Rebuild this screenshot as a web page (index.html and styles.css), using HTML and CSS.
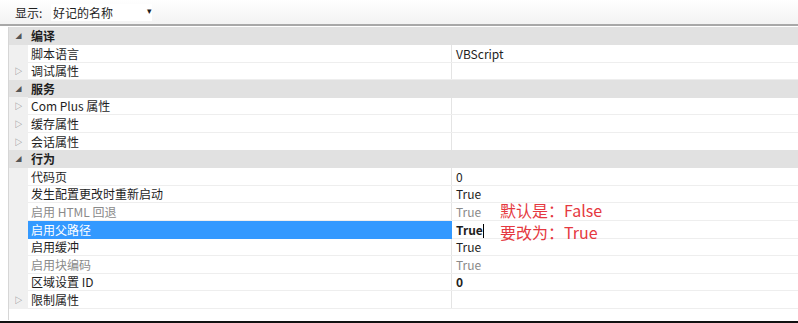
FILE: index.html
```html
<!DOCTYPE html>
<html>
<head>
    <meta charset="utf-8">
    <title>属性</title>
    <link rel="stylesheet" href="styles.css">
</head>
<body>
    <div class="toolbar">
        <span class="lbl">显示:</span>
        <span class="combo">好记的名称<span class="arrow">▾</span></span>
    </div>
    <div class="grid">
        <div class="row sect"><span class="tg open">◢</span><span class="name">编译</span><span class="val"></span></div>
        <div class="row"><span class="tg"></span><span class="name">脚本语言</span><span class="val">VBScript</span></div>
        <div class="row"><span class="tg">▷</span><span class="name">调试属性</span><span class="val"></span></div>
        <div class="row sect"><span class="tg open">◢</span><span class="name">服务</span><span class="val"></span></div>
        <div class="row"><span class="tg">▷</span><span class="name">Com Plus 属性</span><span class="val"></span></div>
        <div class="row"><span class="tg">▷</span><span class="name">缓存属性</span><span class="val"></span></div>
        <div class="row"><span class="tg">▷</span><span class="name">会话属性</span><span class="val"></span></div>
        <div class="row sect"><span class="tg open">◢</span><span class="name">行为</span><span class="val"></span></div>
        <div class="row"><span class="tg"></span><span class="name">代码页</span><span class="val">0</span></div>
        <div class="row"><span class="tg"></span><span class="name">发生配置更改时重新启动</span><span class="val">True</span></div>
        <div class="row dim"><span class="tg"></span><span class="name">启用 HTML 回退</span><span class="val">True</span></div>
        <div class="row sel"><span class="tg"></span><span class="name">启用父路径</span><span class="val"><b>True</b><i class="caret"></i></span></div>
        <div class="row"><span class="tg"></span><span class="name">启用缓冲</span><span class="val">True</span></div>
        <div class="row dim"><span class="tg"></span><span class="name">启用块编码</span><span class="val">True</span></div>
        <div class="row"><span class="tg"></span><span class="name">区域设置 ID</span><span class="val"><b>0</b></span></div>
        <div class="row"><span class="tg">▷</span><span class="name">限制属性</span><span class="val"></span></div>
        <div class="note">默认是：False<br>要改为：True</div>
    </div>
</body>
</html>
```

FILE: styles.css
```css
* {
    margin: 0;
    padding: 0;
    box-sizing: border-box;
}

body {
    width: 798px;
    height: 323px;
    overflow: hidden;
    background: white;
    font-family: "Noto Sans CJK SC", "Noto Sans", sans-serif;
    font-size: 12px;
    color: #1e1e1e;
    border-bottom: 2px solid #111;
}

.toolbar {
    height: 26px;
    display: flex;
    align-items: center;
    background: linear-gradient(#ffffff, #f3f3f3);
    border-bottom: 2px solid #a8a8a8;
    padding-left: 15px;
}

.lbl {
    width: 36px;
}

.combo {
    display: flex;
    justify-content: space-between;
    width: 101px;
    padding-left: 2px;
    background: white;
}

.arrow {
    font-size: 9px;
}

.grid {
    position: relative;
    margin-left: 8px;
    margin-top: 1px;
    height: 293px;
    border-left: 1px solid #d6d6d6;
    background: linear-gradient(90deg, transparent 442px, #e4e4e4 442px, #e4e4e4 443px, transparent 443px) no-repeat 0 0 / 100% 281px;
}

.row {
    display: grid;
    grid-template-columns: 19px 424px 1fr;
    height: 17.6px;
    line-height: 17px;
}

.tg {
    background: #f0f0f0;
    color: #777;
    font-size: 8px;
    text-align: center;
}

.tg.open {
    font-size: 6px;
    color: #555;
}

.name {
    padding-left: 3px;
    border-bottom: 1px solid #eeeeee;
}

.val {
    padding-left: 4px;
    border-bottom: 1px solid #eeeeee;
}

.sect .tg,
.sect .name,
.sect .val {
    background: #e1e1e1;
    border-bottom: 1px solid #e1e1e1;
}

.sect .name {
    font-weight: bold;
}

.dim .name,
.dim .val {
    color: #8a8a8a;
}

.sel .name {
    background: #3399ff;
    color: white;
    border-bottom-color: #3399ff;
}

.caret {
    display: inline-block;
    width: 1px;
    height: 14px;
    background: #000;
    vertical-align: middle;
}

.note {
    position: absolute;
    left: 491px;
    top: 172px;
    font-size: 16px;
    line-height: 22px;
    color: #e53840;
}
```
